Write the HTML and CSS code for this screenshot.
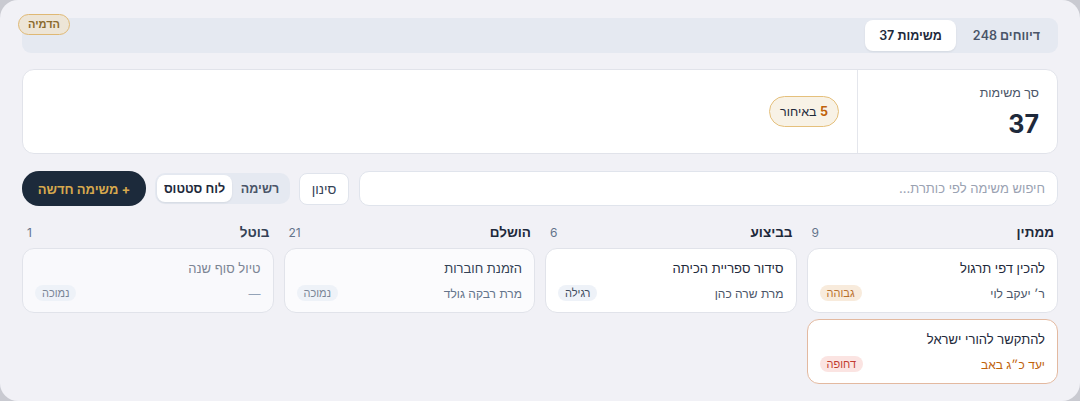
FILE: index.html
```html
<!DOCTYPE html>
<html lang="he" dir="rtl">
<head>
<meta charset="utf-8">
<title>משימות</title>
<link rel="stylesheet" href="styles.css">
</head>
<body>
<div class="app">
  <div class="tabs">
    <span class="demo-badge">הדמיה</span>
    <div class="tab">דיווחים 248</div>
    <div class="tab active">משימות 37</div>
  </div>

  <div class="summary">
    <div class="summary-total">
      <div class="summary-label">סך משימות</div>
      <div class="summary-value">37</div>
    </div>
    <div class="summary-rest">
      <span class="late-pill"><b>5</b> באיחור</span>
    </div>
  </div>

  <div class="toolbar">
    <div class="search">חיפוש משימה לפי כותרת...</div>
    <button class="btn-filter">סינון</button>
    <div class="segmented">
      <span class="seg">רשימה</span>
      <span class="seg active">לוח סטטוס</span>
    </div>
    <button class="btn-new">+ משימה חדשה</button>
  </div>

  <div class="board">
    <div class="column">
      <div class="col-head"><span class="col-title">ממתין</span><span class="col-count">9</span></div>
      <div class="card">
        <div class="card-title">להכין דפי תרגול</div>
        <div class="card-meta"><span class="who">ר׳ יעקב לוי</span><span class="prio high">גבוהה</span></div>
      </div>
      <div class="card overdue">
        <div class="card-title">להתקשר להורי ישראל</div>
        <div class="card-meta"><span class="who due">יעד כ״ג באב</span><span class="prio urgent">דחופה</span></div>
      </div>
    </div>
    <div class="column">
      <div class="col-head"><span class="col-title">בביצוע</span><span class="col-count">6</span></div>
      <div class="card">
        <div class="card-title">סידור ספריית הכיתה</div>
        <div class="card-meta"><span class="who">מרת שרה כהן</span><span class="prio normal">רגילה</span></div>
      </div>
    </div>
    <div class="column">
      <div class="col-head"><span class="col-title">הושלם</span><span class="col-count">21</span></div>
      <div class="card done">
        <div class="card-title">הזמנת חוברות</div>
        <div class="card-meta"><span class="who">מרת רבקה גולד</span><span class="prio low">נמוכה</span></div>
      </div>
    </div>
    <div class="column">
      <div class="col-head"><span class="col-title muted">בוטל</span><span class="col-count">1</span></div>
      <div class="card cancelled">
        <div class="card-title">טיול סוף שנה</div>
        <div class="card-meta"><span class="who">—</span><span class="prio low">נמוכה</span></div>
      </div>
    </div>
  </div>
</div>
</body>
</html>
```

FILE: styles.css
```css
* { box-sizing: border-box; }

html, body {
  margin: 0;
  padding: 0;
}

body {
  background: #c9cad1;
  font-family: "Inter", "Liberation Sans", "Noto Sans", sans-serif;
  color: #1e293b;
  direction: rtl;
}

.app {
  width: 1080px;
  height: 401px;
  background: #f1f1f6;
  border-radius: 18px;
  padding: 18px 22px 0 22px;
  overflow: hidden;
}

/* Tabs */
.tabs {
  position: relative;
  height: 35px;
  background: #e5e9f1;
  border-radius: 9px;
  padding: 2px;
  display: flex;
  align-items: center;
  gap: 1px;
}

.tab {
  height: 31px;
  line-height: 31px;
  padding: 0 16px;
  font-size: 12.5px;
  font-weight: 600;
  color: #4a5568;
  border-radius: 8px;
}

.tab.active {
  background: #ffffff;
  color: #1e293b;
  padding: 0 14px;
  box-shadow: 0 1px 2px rgba(15, 23, 42, 0.08);
}

.demo-badge {
  position: absolute;
  top: -4px;
  left: -4px;
  height: 21px;
  line-height: 19px;
  padding: 0 9px;
  font-size: 11px;
  font-weight: 700;
  color: #8a6a2c;
  background: #ede5d7;
  border: 1px solid #dfb874;
  border-radius: 11px;
}

/* Summary */
.summary {
  margin-top: 16px;
  height: 85px;
  background: #ffffff;
  border: 1px solid #e1e3ea;
  border-radius: 12px;
  display: flex;
}

.summary-total {
  width: 200px;
  border-left: 1px solid #e4e6ec;
  padding: 15px 18px 0 18px;
}

.summary-label {
  font-size: 12.5px;
  color: #4a5568;
  line-height: 16px;
}

.summary-value {
  margin-top: 9px;
  font-size: 25px;
  font-weight: 700;
  color: #1e293b;
  line-height: 28px;
}

.summary-rest {
  flex: 1;
  display: flex;
  align-items: center;
  padding: 0 18px;
}

.late-pill {
  height: 31px;
  line-height: 29px;
  padding: 0 10px;
  font-size: 12.5px;
  color: #1e293b;
  background: #f8f2e6;
  border: 1px solid #e5c07c;
  border-radius: 16px;
}

.late-pill b {
  color: #c0620a;
  font-weight: 700;
}

/* Toolbar */
.toolbar {
  margin-top: 17px;
  height: 35px;
  display: flex;
  align-items: center;
  gap: 9px;
}

.search {
  flex: 1;
  height: 35px;
  line-height: 33px;
  background: #ffffff;
  border: 1px solid #e0e4ec;
  border-radius: 10px;
  padding: 0 12px;
  font-size: 13px;
  color: #9aa2b2;
}

.btn-filter {
  margin-right: 1px;
  width: 50px;
  height: 32px;
  background: #ffffff;
  border: 1px solid #e0e4ec;
  border-radius: 8px;
  font-family: inherit;
  font-size: 13.5px;
  color: #334155;
  padding: 0;
}

.segmented {
  width: 135px;
  height: 31px;
  background: #e5e9f1;
  border-radius: 10px;
  padding: 2px;
  display: flex;
  align-items: center;
}

.seg {
  flex: 1;
  text-align: center;
  font-size: 12.5px;
  font-weight: 600;
  color: #4a5568;
  height: 27px;
  line-height: 27px;
}

.seg.active {
  flex: 0 0 75px;
  background: #ffffff;
  color: #1e293b;
  border-radius: 8px;
  box-shadow: 0 1px 2px rgba(15, 23, 42, 0.08);
}

.btn-new {
  width: 124px;
  height: 35px;
  background: #1c2a3b;
  color: #d7a94e;
  border: none;
  border-radius: 17px;
  font-family: inherit;
  font-size: 13px;
  font-weight: 700;
  padding: 0;
}

/* Board */
.board {
  margin-top: 18px;
  display: grid;
  grid-template-columns: repeat(4, 1fr);
  gap: 10px;
  align-items: start;
}

.column {
  display: flex;
  flex-direction: column;
  gap: 6px;
}

.col-head {
  display: flex;
  justify-content: space-between;
  align-items: center;
  height: 16px;
  padding: 0 4px 0 5px;
  margin-bottom: 2px;
}

.col-title {
  font-size: 13.5px;
  font-weight: 700;
  color: #1e293b;
}

.col-title.muted {
  color: #334155;
}

.col-count {
  font-size: 12px;
  color: #64748b;
}

.card {
  background: #ffffff;
  border: 1px solid #e1e3ea;
  border-radius: 12px;
  padding: 10px 12px 10px 12px;
  height: 65px;
}

.card.overdue {
  border-color: #e3b9a0;
}

.card.done {
  background: #fbfbfd;
}

.card.cancelled {
  background: #f9f9fc;
}

.card-title {
  font-size: 13px;
  line-height: 19px;
  color: #1e293b;
}

.card.done .card-title {
  color: #334155;
}

.card.cancelled .card-title {
  color: #7c8594;
}

.card-meta {
  margin-top: 7px;
  display: flex;
  justify-content: space-between;
  align-items: center;
  height: 16px;
}

.who {
  font-size: 12px;
  color: #4a5568;
}

.card.done .who {
  color: #64748b;
}

.card.cancelled .who {
  color: #94a3b8;
}

.who.due {
  color: #c0620a;
}

.prio {
  height: 16px;
  line-height: 16px;
  padding: 0 7px;
  border-radius: 8px;
  font-size: 11px;
}

.prio.high {
  background: #f8ebdc;
  color: #b8702c;
}

.prio.urgent {
  background: #fbe4e2;
  color: #c23b2f;
}

.prio.normal {
  background: #eef2f8;
  color: #3f4b5e;
}

.prio.low {
  background: #eef2f8;
  color: #7a8596;
}
```
